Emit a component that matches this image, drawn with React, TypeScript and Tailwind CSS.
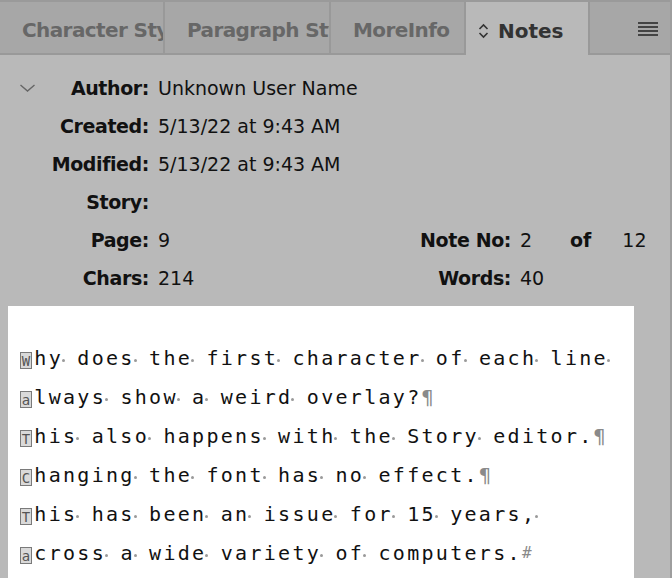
import React from "react";

// Notes panel: tabs, note metadata and a story text block

const tabs = [
  { label: "Character Styles", width: "w-[165px]", inner: "w-[141px]" },
  { label: "Paragraph Styles", width: "w-[166px]", inner: "w-[142px]" },
  { label: "MoreInfo", width: "w-[135px]", inner: "w-[111px]" },
];

const lines = [
  { first: "W", rest: "hy does the first character of each line", end: "dot" },
  { first: "a", rest: "lways show a weird overlay?", end: "para" },
  { first: "T", rest: "his also happens with the Story editor.", end: "para" },
  { first: "C", rest: "hanging the font has no effect.", end: "para" },
  { first: "T", rest: "his has been an issue for 15 years,", end: "dot" },
  { first: "a", rest: "cross a wide variety of computers.", end: "hash" },
];

// visible space marker
const SpaceDot = () => (
  <span className="inline-flex w-[14.34px] h-[20px] items-center">
    <span className="w-[3px] h-[3px] rounded-full bg-[#9a9a9a] ml-[-1px] mt-[5px]" />
  </span>
);

const Overlay = ({ ch }: { ch: string }) => (
  <span className="inline-block w-[14.34px]">
    <span className="inline-flex items-center justify-center w-[12px] h-[17px] border border-[#7a7a7a] bg-[#d9d9d9] text-[14px] leading-none text-[#555] tracking-normal relative top-[1px] overflow-hidden">
      {ch}
    </span>
  </span>
);

const TextLine = ({ first, rest, end }: { first: string; rest: string; end: string }) => {
  const words = rest.split(" ");
  return (
    <div className="h-[39px] flex items-center whitespace-nowrap">
      <Overlay ch={first} />
      {words.map((w, i) => (
        <React.Fragment key={i}>
          <span>{w}</span>
          {i < words.length - 1 && <SpaceDot />}
        </React.Fragment>
      ))}
      {end === "dot" && <SpaceDot />}
      {end === "para" && <span className="text-[#8a8a8a]">¶</span>}
      {end === "hash" && <span className="text-[#8a8a8a] text-[16px]">#</span>}
    </div>
  );
};

const Row = ({
  label,
  value,
  chevron,
  children,
}: {
  label: string;
  value?: string;
  chevron?: boolean;
  children?: React.ReactNode;
}) => (
  <div className="h-[38px] flex items-center">
    <div className="w-[149px] flex items-center justify-between pl-[19px]">
      <span className="w-[18px]">
        {chevron && (
          <svg width="17" height="10" viewBox="0 0 17 10" fill="none">
            <path d="M1.5 2l7 6 7-6" stroke="#666" strokeWidth="1.4" />
          </svg>
        )}
      </span>
      <span className="font-bold text-[#111] tracking-[-0.4px]">{label}</span>
    </div>
    <span className="ml-[9px] w-[222px] text-[#111]">{value}</span>
    {children}
  </div>
);

export default function App() {
  return (
    <div
      className="w-[672px] h-[578px] bg-[#b9b9b9] overflow-hidden flex flex-col border-r-2 border-[#9e9e9e]"
      style={{ fontFamily: '"DejaVu Sans", "Liberation Sans", sans-serif' }}
    >
      {/* Tab bar */}
      <div className="h-[55px] flex border-t-2 border-[#9a9a9a] shrink-0">
        {tabs.map((t) => (
          <div
            key={t.label}
            className={`${t.width} h-full bg-[#a7a7a7] border-r-2 border-b-2 border-[#999] flex items-center pl-[22px] pt-[4px]`}
          >
            <span
              className={`${t.inner} block overflow-hidden text-clip whitespace-nowrap text-[20px] tracking-[-0.6px] font-bold text-[#676767]`}
            >
              {t.label}
            </span>
          </div>
        ))}
        <div className="w-[122px] h-full bg-[#b9b9b9] flex items-center pl-[12px] pt-[4px] gap-[9px] text-[20px] font-bold text-[#333]">
          <svg width="11" height="16" viewBox="0 0 11 16" fill="none">
            <path d="M1.5 6l4-4 4 4M1.5 10l4 4 4-4" stroke="#333" strokeWidth="1.6" />
          </svg>
          Notes
        </div>
        <div className="flex-1 h-full bg-[#a7a7a7] border-l-2 border-b-2 border-[#999] flex items-center justify-end pr-[12px]">
          <div className="flex flex-col gap-[2px] mt-[3px]">
            <div className="w-[20px] h-[2px] bg-[#444]" />
            <div className="w-[20px] h-[2px] bg-[#444]" />
            <div className="w-[20px] h-[2px] bg-[#444]" />
            <div className="w-[20px] h-[2px] bg-[#444]" />
          </div>
        </div>
      </div>

      {/* Note info */}
      <div className="pt-[14px] text-[19px] shrink-0">
        <Row label="Author:" value="Unknown User Name" chevron />
        <Row label="Created:" value="5/13/22 at 9:43 AM" />
        <Row label="Modified:" value="5/13/22 at 9:43 AM" />
        <Row label="Story:" />
        <Row label="Page:" value="9">
          <span className="w-[131px] text-right font-bold text-[#111] tracking-[-0.4px]">Note No:</span>
          <span className="ml-[9px] w-[50px] text-[#111]">2</span>
          <span className="font-bold text-[#111]">of</span>
          <span className="ml-[31px] text-[#111]">12</span>
        </Row>
        <Row label="Chars:" value="214">
          <span className="w-[131px] text-right font-bold text-[#111] tracking-[-0.4px]">Words:</span>
          <span className="ml-[9px] text-[#111]">40</span>
        </Row>
      </div>

      {/* Story text */}
      <div
        className="mt-[9px] ml-[8px] mr-[36px] flex-1 bg-white pt-[32px] pl-[12px] text-[20px] tracking-[2.3px] text-[#111]"
        style={{ fontFamily: '"DejaVu Sans Mono", "Liberation Mono", monospace' }}
      >
        {lines.map((l, i) => (
          <TextLine key={i} {...l} />
        ))}
      </div>
    </div>
  );
}
